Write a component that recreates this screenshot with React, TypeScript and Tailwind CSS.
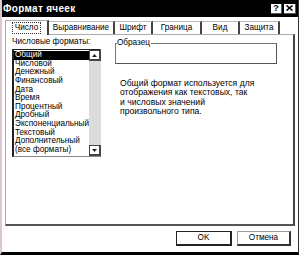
const formats = [
  "Общий",
  "Числовой",
  "Денежный",
  "Финансовый",
  "Дата",
  "Время",
  "Процентный",
  "Дробный",
  "Экспоненциальный",
  "Текстовый",
  "Дополнительный",
  "(все форматы)",
];

const tabs = [
  { label: "Число", w: "w-[44px]" },
  { label: "Выравнивание", w: "w-[66px]" },
  { label: "Шрифт", w: "w-[38px]" },
  { label: "Граница", w: "w-[49px]" },
  { label: "Вид", w: "w-[38px]" },
  { label: "Защита", w: "w-[40px]" },
];

function ScrollButton({ up }: { up?: boolean }) {
  return (
    <div className="w-[12px] h-[11px] bg-white border border-[#444] border-r-2 border-b-2 flex items-center justify-center">
      <svg width="5" height="3" viewBox="0 0 5 3">
        {up ? <path d="M2.5 0 L5 3 L0 3 Z" fill="#222" /> : <path d="M0 0 L5 0 L2.5 3 Z" fill="#222" />}
      </svg>
    </div>
  );
}

export default function App() {
  return (
    <div
      className="w-[299px] h-[255px] bg-white flex flex-col border-l-2 border-l-[#d9c9cf] border-r border-r-[#333] border-b-[3px] border-b-black text-black text-[8.2px] leading-none"
      style={{ fontFamily: '"Liberation Sans", Arial, sans-serif' }}
    >
      {/* title bar */}
      <div className="h-[17px] bg-black flex items-center pl-[1px] pr-[2px]">
        <span className="text-white font-bold text-[10px] tracking-[0.3px]">Формат ячеек</span>
        <div className="ml-auto flex gap-[2px]">
          <div className="w-[11px] h-[10px] bg-white border-r border-b border-[#555] flex items-center justify-center text-[9px] font-bold">?</div>
          <div className="w-[12px] h-[10px] bg-white border-r border-b border-[#555] flex items-center justify-center">
            <svg width="7" height="6" viewBox="0 0 7 6">
              <path d="M0.5 0.5 L6.5 5.5 M6.5 0.5 L0.5 5.5" stroke="#000" strokeWidth="1.6" />
            </svg>
          </div>
        </div>
      </div>

      {/* tabs */}
      <div className="flex items-end pl-[3px] mt-[2px] h-[15px]">
        {tabs.map((t, i) =>
          i === 0 ? (
            <div key={t.label} className={`${t.w} shrink-0 h-[15px] flex items-center justify-center border-l border-t border-[#aaa] border-r-2 border-r-[#444] bg-white relative z-10 -mb-px`}>
              <span className="border border-dotted border-[#333] px-[2px] py-[1px] whitespace-nowrap">{t.label}</span>
            </div>
          ) : (
            <div key={t.label} className={`${t.w} shrink-0 h-[13px] flex items-center justify-center border-t border-[#bbb] border-r-2 border-r-[#444] whitespace-nowrap`}>
              {t.label}
            </div>
          )
        )}
      </div>

      {/* panel */}
      <div className="ml-[3px] mr-[3px] h-[192px] border-l border-t border-[#aaa] border-r-2 border-b-2 border-r-[#444] border-b-[#555] flex pt-[3px] pl-[6px]">
        <div className="flex flex-col w-[89px]">
          <div className="h-[9px] whitespace-nowrap">Числовые форматы:</div>
          <div className="mt-[2px] h-[108px] border-l-2 border-t border-[#222] border-r border-b border-r-[#888] border-b-[#888] flex">
            <div className="flex-1 flex flex-col pt-[1px]">
              {formats.map((f, i) => (
                <div
                  key={f}
                  className={
                    i === 0
                      ? "h-[8.6px] pl-[1px] bg-black text-white flex items-center whitespace-nowrap"
                      : "h-[8.6px] pl-[1px] flex items-center whitespace-nowrap"
                  }
                >
                  {f}
                </div>
              ))}
            </div>
            <div className="w-[12px] bg-[#dcdcdc] flex flex-col justify-between">
              <ScrollButton up />
              <ScrollButton />
            </div>
          </div>
        </div>

        <div className="ml-[14px] flex flex-col">
          <div className="relative mt-[5px] w-[162px] h-[21px] border border-[#777] border-r-[#555] border-b-[#555]">
            <span className="absolute -top-[5px] left-[1px] bg-white pr-[1px]">Образец</span>
          </div>
          <div className="mt-[15px] ml-[5px] leading-[9.3px] text-[8.6px]">
            Общий формат используется для
            <br />
            отображения как текстовых, так
            <br />
            и числовых значений
            <br />
            произвольного типа.
          </div>
        </div>
      </div>

      {/* buttons */}
      <div className="flex justify-end gap-[5px] mt-[5px] pr-[7px]">
        <div className="w-[56px] h-[15px] border border-[#222] border-r-2 border-b-2 flex items-center justify-center">OK</div>
        <div className="w-[54px] h-[15px] border border-[#999] border-r-2 border-b-2 border-r-[#333] border-b-[#333] flex items-center justify-center">Отмена</div>
      </div>
    </div>
  );
}
